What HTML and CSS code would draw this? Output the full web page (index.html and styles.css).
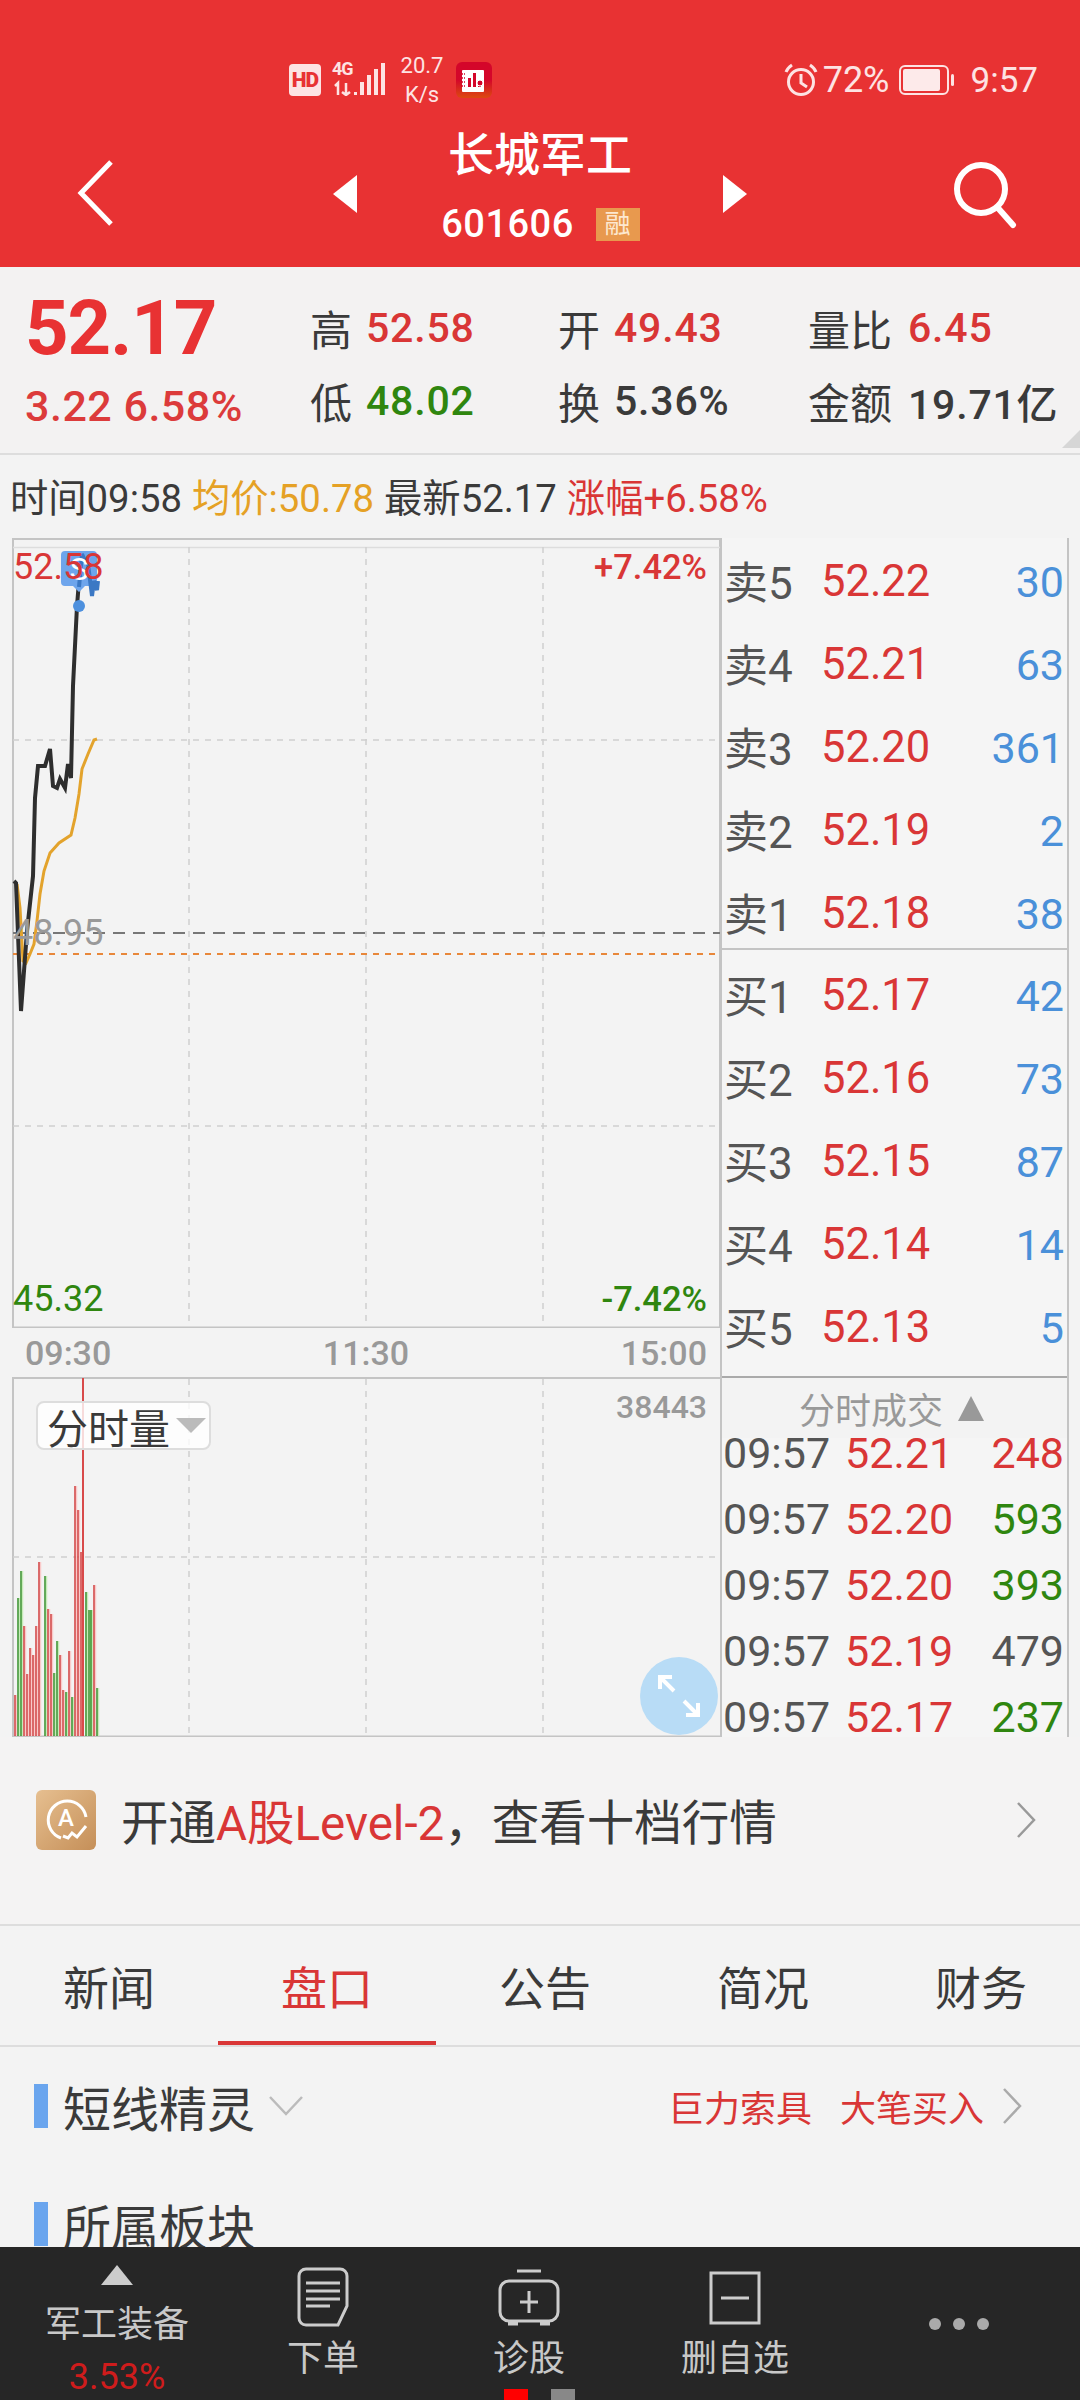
FILE: index.html
```html
<!DOCTYPE html>
<html lang="zh-CN">
<head>
    <meta charset="UTF-8">
    <meta name="viewport" content="width=device-width, initial-scale=1.0">
    <title>长城军工</title>
    <link rel="stylesheet" href="styles.css">
</head>
<body>
<div class="page">
    <header class="top">
        <div class="status">
            <div class="status-left">
                <span class="hd">HD</span>
                <div class="signal">
                    <span class="net">4G</span>
                    <svg class="signal-icon" width="54" height="34" viewBox="0 0 54 34">
                        <path d="M3 24l3-3v12M14 21v12M10 30l4 3 4-3" fill="none" stroke="#fde3e3" stroke-width="2.5"/>
                        <path d="M22 30h3v3h-3zM28 20h4v13h-4zM35 13h4v20h-4zM42 7h4v26h-4zM49 1h4v32h-4z" fill="#fde3e3"/>
                    </svg>
                </div>
                <div class="speed">20.7<br>K/s</div>
                <svg class="app" width="36" height="36" viewBox="0 0 36 36">
                    <defs>
                        <linearGradient id="appbg" x1="0" y1="0" x2="0" y2="1">
                            <stop offset="0.5" stop-color="#d4062a"/>
                            <stop offset="1" stop-color="#dc4a10"/>
                        </linearGradient>
                    </defs>
                    <rect width="36" height="36" rx="6" fill="url(#appbg)"/>
                    <rect x="6" y="8" width="22" height="22" rx="1" fill="#fff"/>
                    <path d="M5 12h4M5 16h4M5 20h4M5 24h4" stroke="#d4062a" stroke-width="1.500" stroke-dasharray="2 1"/>
                    <path d="M12 25v-9h3v9zM17 25V11h3v14zM22 25v-6h3v6z" fill="#d4062a"/>
                    <circle cx="24" cy="21" r="3" fill="#d4062a" stroke="#fff"/>
                </svg>
            </div>
            <div class="status-right">
                <svg width="34" height="34" viewBox="0 0 34 34" fill="none" stroke="#fde3e3" stroke-width="3">
                    <circle cx="17" cy="19" r="12.5"/>
                    <path d="M17 11v9l6 4M2 9c1-3 3-5 6-7M32 9c-1-3-3-5-6-7"/>
                </svg>
                <span class="pct">72%</span>
                <svg class="batt" width="56" height="30" viewBox="0 0 56 30">
                    <rect x="1" y="1" width="48" height="28" rx="5" fill="none" stroke="#fde3e3" stroke-width="2"/>
                    <rect x="4" y="4" width="37" height="22" rx="2" fill="#fdeaea"/>
                    <rect x="52" y="9" width="3" height="12" rx="1.5" fill="#fde3e3"/>
                </svg>
                <span class="clock">9:57</span>
            </div>
        </div>
        <div class="bar">
            <div class="back">
                <svg width="40" height="66" viewBox="0 0 40 66" fill="none" stroke="#fff" stroke-width="5">
                    <path d="M34 2L4 33l30 31"/>
                </svg>
            </div>
            <i class="tri tri-left"></i>
            <div class="stock">
                <div class="stock-name">长城军工</div>
                <div class="stock-code">601606<span class="rong">融</span></div>
            </div>
            <i class="tri tri-right"></i>
            <svg class="search" width="66" height="68" viewBox="0 0 66 68" fill="none" stroke="#fff" stroke-width="6">
                <circle cx="28" cy="28" r="24"/>
                <path d="M45 47l15 17" stroke-linecap="round"/>
            </svg>
        </div>
    </header>

    <div class="content">
        <section class="quote">
            <div class="price">
                <div class="price-now">52.17</div>
                <div class="price-chg">3.22 6.58%</div>
            </div>
            <div class="stats">
                <div class="stat"><span>高</span><b class="red">52.58</b></div>
                <div class="stat"><span>开</span><b class="red">49.43</b></div>
                <div class="stat"><span class="wide">量比</span><b class="red">6.45</b></div>
                <div class="stat"><span>低</span><b class="green">48.02</b></div>
                <div class="stat"><span>换</span><b>5.36%</b></div>
                <div class="stat"><span class="wide">金额</span><b>19.71亿</b></div>
            </div>
            <i class="corner"></i>
        </section>

        <div class="info">
            <span>时间09:58</span>
            <span class="gold">均价:50.78</span>
            <span>最新52.17</span>
            <span class="red">涨幅+6.58%</span>
        </div>

        <section class="market">
            <div class="left">
                <div class="chart">
                    <svg width="709" height="790" viewBox="12 537 709 790">
                        <path class="edge" d="M13 1327V538H720V1327M12 1326.500H721"/>
                        <path class="top-line" d="M13 546.500H720"/>
                        <path class="grid" d="M189 546V1326M366 546V1326M543 546V1326M13 739H720M13 1125H720"/>
                        <path class="base" d="M13 932H720"/>
                        <path class="avg-base" d="M13 953H720"/>
                        <polyline class="avg" points="17,883 20,907 23,960 26,962 30,953 34,943 37,920 40,893 44,870 50,852 59,842 71,834 75,817 79,793 82,768 88,753 94,739 97,738"/>
                        <polyline class="line" points="14,880 16,882 21,1010 27,930 33,875 35,797 38,765 45,765 50,748 53,785 57,787 60,778 65,787 68,763 71,777 73,685 77,605 79,580"/>
                        <path class="marker" d="M65 550h28a4 4 0 0 1 4 4v27a4 4 0 0 1-4 4H85l-6 6-6-6H65a4 4 0 0 1-4-4V554a4 4 0 0 1 4-4z"/>
                        <polyline class="line-top" points="79,586 82,553 85,560 88,563 92,595 94,580 97,589 98,580"/>
                        <circle class="dot" cx="79" cy="605" r="6"/>
                        <text class="marker-s" x="79" y="579">S</text>
                    </svg>
                    <span class="lbl lbl-high">52.58</span>
                    <span class="lbl lbl-mid">48.95</span>
                    <span class="lbl lbl-low">45.32</span>
                    <span class="pctl pctl-up">+7.42%</span>
                    <span class="pctl pctl-down">-7.42%</span>
                </div>
                <div class="axis"><span>09:30</span><span>11:30</span><span>15:00</span></div>
                <div class="vol">
                    <svg width="709" height="360" viewBox="12 1376 709 360">
                        <path class="edge" d="M13 1736V1377H720M12 1735.500H721"/>
                        <path class="grid" d="M189 1378V1735M366 1378V1735M543 1378V1735M13 1556H720"/>
                        <path class="bar-pale-r" d="M16.500 1735V1694M25.500 1735V1625M28.500 1735V1673M31.500 1735V1647M34.500 1735V1654M37.500 1735V1625M40.500 1735V1561M49.500 1735V1608M52.500 1735V1613M61.500 1735V1654M64.500 1735V1689M70.500 1735V1650M76.500 1735V1485M79.500 1735V1509M82.500 1735V1551M95.500 1735V1584"/>
                        <path class="bar-pale-g" d="M19.500 1735V1597M22.500 1735V1570M46.500 1735V1575M55.500 1735V1672M58.500 1735V1640M67.500 1735V1691M73.500 1735V1696M87.500 1735V1591M90.500 1735V1609M92.500 1735V1609M98.500 1735V1687"/>
                        <path class="bar-r" d="M15 1735V1694M24 1735V1625M27 1735V1673M30 1735V1647M33 1735V1654M36 1735V1625M39 1735V1561M48 1735V1608M51 1735V1613M60 1735V1654M63 1735V1689M69 1735V1650M75 1735V1485M78 1735V1509M81 1735V1551M94 1735V1584"/>
                        <path class="bar-g" d="M18 1735V1597M21 1735V1570M45 1735V1575M54 1735V1672M57 1735V1640M66 1735V1691M72 1735V1696M86 1735V1591M89 1735V1609M91 1735V1609M97 1735V1687"/>
                        <path class="cross" d="M83 1377V1735"/>
                    </svg>
                    <div class="vol-select">分时量<i class="vol-arrow"></i></div>
                    <span class="vol-max">38443</span>
                    <div class="expand">
                        <svg width="44" height="44" viewBox="0 0 44 44" fill="none" stroke="#fff" stroke-width="4">
                            <path d="M3 15V3h12M3 3l14 14M41 29v12H29M41 41L27 27"/>
                        </svg>
                    </div>
                </div>
            </div>
            <div class="right">
                <div class="book">
                    <div class="sell">
                        <div class="level"><span>卖5</span><b>52.22</b><em>30</em></div>
                        <div class="level"><span>卖4</span><b>52.21</b><em>63</em></div>
                        <div class="level"><span>卖3</span><b>52.20</b><em>361</em></div>
                        <div class="level"><span>卖2</span><b>52.19</b><em>2</em></div>
                        <div class="level"><span>卖1</span><b>52.18</b><em>38</em></div>
                    </div>
                    <div class="buy">
                        <div class="level"><span>买1</span><b>52.17</b><em>42</em></div>
                        <div class="level"><span>买2</span><b>52.16</b><em>73</em></div>
                        <div class="level"><span>买3</span><b>52.15</b><em>87</em></div>
                        <div class="level"><span>买4</span><b>52.14</b><em>14</em></div>
                        <div class="level"><span>买5</span><b>52.13</b><em>5</em></div>
                    </div>
                </div>
                <div class="ticks-head">分时成交<i class="ticks-arrow"></i></div>
                <div class="ticks">
                    <div class="tick"><span>09:57</span><b>52.21</b><em class="red">248</em></div>
                    <div class="tick"><span>09:57</span><b>52.20</b><em class="green">593</em></div>
                    <div class="tick"><span>09:57</span><b>52.20</b><em class="green">393</em></div>
                    <div class="tick"><span>09:57</span><b>52.19</b><em>479</em></div>
                    <div class="tick"><span>09:57</span><b>52.17</b><em class="green">237</em></div>
                </div>
            </div>
        </section>

        <div class="promo">
            <svg class="promo-icon" width="60" height="60" viewBox="0 0 60 60">
                <defs>
                    <linearGradient id="tan" x1="0" y1="0" x2="1" y2="1">
                        <stop offset="0" stop-color="#e6bf90"/>
                        <stop offset="1" stop-color="#c58f58"/>
                    </linearGradient>
                </defs>
                <rect width="60" height="60" rx="6" fill="url(#tan)"/>
                <path d="M25 48A19 19 0 1 1 50 27" fill="none" stroke="#fff" stroke-width="3"/>
                <path d="M27 46l5 2 4-5 5 4 9-11" fill="none" stroke="#fff" stroke-width="3"/>
                <text class="promo-a" x="30" y="36">A</text>
            </svg>
            <div class="promo-text">开通<span class="red">A股Level-2</span>，查看十档行情</div>
            <svg class="chev" width="20" height="36" viewBox="0 0 20 36" fill="none" stroke="#999" stroke-width="2.500">
                <path d="M2 1l16 17L2 35"/>
            </svg>
        </div>

        <nav class="tabs">
            <div class="tab">新闻</div>
            <div class="tab on">盘口</div>
            <div class="tab">公告</div>
            <div class="tab">简况</div>
            <div class="tab">财务</div>
        </nav>

        <div class="block">
            <i class="mark"></i>
            <span class="block-title">短线精灵</span>
            <svg class="block-down" width="34" height="20" viewBox="0 0 34 20" fill="none" stroke="#bbb" stroke-width="2.500">
                <path d="M1 1l16 17L33 1"/>
            </svg>
            <div class="block-links">
                <span>巨力索具</span>
                <span>大笔买入</span>
                <svg width="20" height="36" viewBox="0 0 20 36" fill="none" stroke="#aaa" stroke-width="2.500">
                    <path d="M2 1l16 17L2 35"/>
                </svg>
            </div>
        </div>
        <div class="block">
            <i class="mark"></i>
            <span class="block-title">所属板块</span>
        </div>
    </div>

    <footer class="dock">
        <div class="dock-first">
            <i class="dock-tri"></i>
            <div class="dock-sector">军工装备</div>
            <div class="dock-pct">3.53%</div>
        </div>
        <div class="tool">
            <svg width="52" height="60" viewBox="0 0 52 60" fill="none" stroke="#ccc" stroke-width="3">
                <path d="M9 2h34a7 7 0 0 1 7 7v30l-9 19H9a7 7 0 0 1-7-7V9a7 7 0 0 1 7-7z"/>
                <path d="M9 16h34M9 24h34M9 32h34M9 39h24"/>
            </svg>
            <span>下单</span>
        </div>
        <div class="tool">
            <svg width="62" height="60" viewBox="0 0 62 60" fill="none" stroke="#ccc" stroke-width="3">
                <path d="M19 4h24"/>
                <rect x="2" y="14" width="58" height="40" rx="9"/>
                <path d="M31 24v22M22 35h18"/>
                <path d="M10 56h10M42 56h10" stroke-width="5"/>
            </svg>
            <span>诊股</span>
        </div>
        <div class="tool">
            <svg width="52" height="60" viewBox="0 0 52 60" fill="none" stroke="#ccc" stroke-width="3">
                <rect x="2" y="6" width="48" height="50"/>
                <path d="M12 31h28"/>
            </svg>
            <span>删自选</span>
        </div>
        <div class="more"><i></i><i></i><i></i></div>
        <div class="pager"><i class="pager-on"></i><i></i></div>
    </footer>
</div>
</body>
</html>
```

FILE: styles.css
```css
*{
    box-sizing: border-box;
}
body{
    margin: 0;
    font-family: Roboto, "Noto Sans CJK SC", sans-serif;
    color: #3a3a3a;
}
i{
    display: block;
}
em{
    font-style: normal;
}
.red{
    color: #d93636;
}
.green{
    color: #2f860f;
}
.gold{
    color: #e5a125;
}
.page{
    width: 1080px;
    height: 2400px;
    display: flex;
    flex-direction: column;
    overflow: hidden;
    background-color: #f3f3f3;
}

/* top red header */
.top{
    height: 267px;
    flex: none;
    background-color: #e83233;
    color: #fde3e3;
}
.status{
    height: 110px;
    padding: 50px 42px 0 289px;
    display: flex;
    justify-content: space-between;
    align-items: center;
}
.status-left,
.status-right{
    display: flex;
    align-items: center;
}
.hd{
    width: 32px;
    height: 32px;
    border-radius: 4px;
    background-color: #fde3e3;
    color: #e83233;
    font-size: 21px;
    font-weight: 900;
    line-height: 32px;
    text-align: center;
    letter-spacing: -1px;
}
.signal{
    width: 56px;
    height: 36px;
    margin-left: 11px;
    position: relative;
}
.net{
    position: absolute;
    left: 0;
    top: -2px;
    font-size: 18px;
    font-weight: 700;
    line-height: 18px;
    letter-spacing: -1px;
}
.signal-icon{
    display: block;
}
.speed{
    width: 50px;
    margin-left: 9px;
    font-size: 22px;
    line-height: 29px;
    text-align: center;
}
.app{
    margin-left: 9px;
    display: block;
}
.status-right svg{
    display: block;
}
.pct{
    margin-left: 5px;
    font-size: 36px;
}
.batt{
    margin-left: 9px;
}
.clock{
    margin-left: 16px;
    font-size: 35px;
}
.bar{
    height: 157px;
    display: flex;
    align-items: flex-start;
    color: #fff;
}
.back{
    width: 333px;
    padding: 50px 0 0 77px;
}
.tri{
    width: 0;
    height: 0;
    margin-top: 65px;
    border-top: 19px solid transparent;
    border-bottom: 19px solid transparent;
}
.tri-left{
    border-right: 24px solid #fff;
}
.tri-right{
    border-left: 24px solid #fff;
}
.stock{
    width: 366px;
    display: flex;
    flex-direction: column;
    align-items: center;
}
.stock-name{
    margin-top: 15px;
    font-size: 46px;
    line-height: 60px;
    font-weight: 500;
}
.stock-code{
    margin-top: 9px;
    font-size: 38px;
    font-weight: 500;
    line-height: 60px;
    display: flex;
    align-items: center;
    letter-spacing: 0.5px;
    padding-left: 1px;
}
.rong{
    width: 44px;
    height: 33px;
    margin-left: 22px;
    background-color: #e8994e;
    color: #fde8d0;
    font-size: 26px;
    font-weight: 400;
    line-height: 33px;
    text-align: center;
}
.search{
    margin: 51px 0 0 206px;
}

/* quote block */
.content{
    flex: 1;
    overflow: hidden;
}
.quote{
    height: 188px;
    padding: 24px 0 0 25px;
    display: flex;
    position: relative;
    background-color: #f3f2f2;
    border-bottom: 2px solid #ddd;
}
.price{
    width: 285px;
    color: #e83233;
}
.price-now{
    font-size: 76px;
    font-weight: 700;
    line-height: 74px;
    letter-spacing: -1px;
}
.price-chg{
    margin-top: 4px;
    font-size: 43px;
    line-height: 74px;
    letter-spacing: 0.5px;
    font-weight: 500;
    color: #dc3b3b;
}
.stats{
    display: grid;
    grid-template-columns: 248px 250px auto;
    grid-auto-rows: 73px;
}
.stat{
    display: flex;
    align-items: center;
    font-size: 42px;
}
.stat span{
    margin-right: 14px;
}
.stat .wide{
    margin-right: 16px;
}
.stat b{
    font-weight: 500;
    font-size: 41px;
    letter-spacing: 0.8px;
}
.corner{
    position: absolute;
    right: 0;
    bottom: 5px;
    width: 0;
    height: 0;
    border-left: 18px solid transparent;
    border-bottom: 18px solid #d6d6d6;
}

/* line above the chart */
.info{
    height: 83px;
    padding: 0 0 3px 10px;
    display: flex;
    align-items: center;
    gap: 10px;
    font-size: 38.3px;
}

/* chart and order book */
.market{
    height: 1199px;
    padding-left: 12px;
    display: flex;
}
.left{
    width: 708px;
}
.chart{
    height: 790px;
    position: relative;
}
.chart svg,
.vol svg{
    display: block;
    fill: none;
}
.edge{
    stroke: #c4c4c4;
    stroke-width: 2;
}
.top-line{
    stroke: #ddd;
    stroke-width: 1.5;
}
.grid{
    stroke: #cfcfcf;
    stroke-width: 1.5;
    stroke-dasharray: 6 6;
}
.base{
    stroke: #777;
    stroke-width: 2;
    stroke-dasharray: 12 8;
}
.avg-base{
    stroke: #e8873a;
    stroke-width: 2;
    stroke-dasharray: 6 6;
}
.avg{
    stroke: #e3a32c;
    stroke-width: 3;
}
.line{
    stroke: #2e2e2e;
    stroke-width: 4;
}
.line-top{
    stroke: #3b78c4;
    stroke-width: 4;
}
.marker{
    fill: #6ea5ec;
}
.dot{
    fill: #4d90de;
}
.marker-s{
    fill: #fff;
    font-size: 32px;
    text-anchor: middle;
}
.lbl{
    position: absolute;
    left: 1px;
    font-size: 36px;
    line-height: 40px;
}
.lbl-high{
    top: 9px;
    color: #d93636;
}
.lbl-mid{
    top: 375px;
    color: #999;
}
.lbl-low{
    top: 741px;
    color: #2f860f;
}
.pctl{
    position: absolute;
    right: 13px;
    font-size: 34.5px;
    line-height: 40px;
    font-weight: 500;
}
.pctl-up{
    top: 9px;
    color: #d93636;
}
.pctl-down{
    top: 741px;
    color: #2f860f;
}
.axis{
    height: 49px;
    padding: 0 13px;
    display: flex;
    justify-content: space-between;
    align-items: center;
    color: #999;
    font-size: 34px;
    font-weight: 500;
}
.vol{
    height: 360px;
    position: relative;
}
.bar-r,
.bar-g{
    stroke-width: 1.5;
}
.bar-pale-r,
.bar-pale-g{
    stroke-width: 1.5;
}
.bar-r{
    stroke: #d23f3f;
}
.bar-g{
    stroke: #36912a;
}
.bar-pale-r{
    stroke: #f9caca;
}
.bar-pale-g{
    stroke: #c6ebb8;
}
.cross{
    stroke: #d84a4a;
    stroke-width: 2;
}
.vol-select{
    position: absolute;
    left: 24px;
    top: 24px;
    width: 175px;
    height: 49px;
    padding-left: 9px;
    display: flex;
    align-items: center;
    border: 2px solid #ddd;
    border-radius: 8px;
    background-color: rgba(255, 255, 255, 0.8);
    font-size: 41px;
}
.vol-arrow{
    margin-left: 6px;
    width: 0;
    height: 0;
    border-left: 15px solid transparent;
    border-right: 15px solid transparent;
    border-top: 15px solid #bbb;
}
.vol-max{
    position: absolute;
    right: 13px;
    top: 12px;
    color: #999;
    font-size: 32px;
    line-height: 36px;
    font-weight: 500;
}
.expand{
    position: absolute;
    left: 628px;
    top: 280px;
    width: 78px;
    height: 78px;
    border-radius: 50%;
    background-color: #b8dcf6;
    display: flex;
    align-items: center;
    justify-content: center;
}
.right{
    width: 349px;
    border-left: 2px solid #c4c4c4;
    border-right: 2px solid #c4c4c4;
    background-color: #f5f5f5;
}
.book{
    height: 840px;
    padding-top: 2px;
    border-bottom: 2px solid #aaa;
}
.sell{
    height: 410px;
    border-bottom: 2px solid #c4c4c4;
}
.buy{
    padding-top: 4px;
}
.level{
    height: 83px;
    padding: 0 3px 0 2px;
    display: flex;
    align-items: center;
    font-size: 44px;
    color: #555;
}
.level span{
    width: 97px;
    flex: none;
    margin-top: -3px;
}
.level b{
    font-weight: 400;
    font-size: 43.5px;
    color: #d93636;
}
.level em{
    flex: 1;
    text-align: right;
    font-size: 43px;
    color: #4a90d9;
}
.ticks-head{
    height: 60px;
    background-color: #f3f3f3;
    padding-left: 77px;
    display: flex;
    align-items: center;
    color: #999;
    font-size: 36px;
}
.ticks-arrow{
    margin-left: 15px;
    width: 0;
    height: 0;
    border-left: 13px solid transparent;
    border-right: 13px solid transparent;
    border-bottom: 25px solid #999;
}
.ticks{
    height: 297px;
    overflow: hidden;
}
.tick{
    height: 66px;
    padding: 0 3px 0 1px;
    display: flex;
    align-items: center;
    font-size: 43px;
    line-height: 34px;
    color: #555;
}
.tick:first-child{
    margin-top: -18px;
}
.tick b{
    margin-left: 15px;
    font-weight: 400;
    color: #d93636;
}
.tick em{
    flex: 1;
    text-align: right;
}

/* level 2 promo */
.promo{
    height: 189px;
    padding: 0 44px 22px 36px;
    display: flex;
    align-items: center;
    border-bottom: 2px solid #ddd;
    background-color: #f4f3f3;
}
.promo-icon{
    flex: none;
}
.promo-a{
    fill: #fff;
    font-size: 24px;
    font-weight: 500;
    text-anchor: middle;
}
.promo-text{
    margin-left: 25px;
    flex: 1;
    font-size: 47.5px;
}

/* tabs */
.tabs{
    height: 121px;
    display: flex;
    border-bottom: 2px solid #ddd;
}
.tab{
    flex: 0 0 218px;
    height: 119px;
    padding-top: 7px;
    font-size: 46px;
    line-height: 112px;
    text-align: center;
}
.tab.on{
    color: #d93636;
    border-bottom: 4px solid #d93636;
}

/* sections under the tabs */
.block{
    height: 118px;
    padding: 0 58px 0 34px;
    display: flex;
    align-items: center;
}
.mark{
    width: 14px;
    height: 44px;
    background-color: #6aa5ee;
}
.block-title{
    margin-left: 15px;
    font-size: 48px;
}
.block-down{
    margin-left: 14px;
}
.block-links{
    margin-left: auto;
    display: flex;
    align-items: center;
    gap: 28px;
    color: #d93636;
    font-size: 36px;
}
.block-links svg{
    margin-left: -10px;
}

/* bottom dock */
.dock{
    height: 153px;
    flex: none;
    padding-left: 14px;
    display: flex;
    position: relative;
    background-color: #262626;
    color: #c8c8c8;
}
.dock-first,
.tool{
    width: 206px;
    display: flex;
    flex-direction: column;
    align-items: center;
}
.dock-tri{
    margin-top: 18px;
    width: 0;
    height: 0;
    border-left: 16px solid transparent;
    border-right: 16px solid transparent;
    border-bottom: 20px solid #ccc;
}
.dock-sector{
    margin-top: 15px;
    font-size: 36px;
    line-height: 50px;
}
.dock-pct{
    margin-top: 2px;
    font-size: 36px;
    line-height: 50px;
    color: #cf1c1c;
}
.tool{
    padding-top: 20px;
}
.tool svg{
    display: block;
}
.tool span{
    margin-top: 7px;
    font-size: 36px;
    line-height: 50px;
}
.more{
    margin-left: 18px;
    width: 206px;
    display: flex;
    justify-content: center;
    gap: 12px;
    padding-top: 71px;
}
.more i{
    width: 12px;
    height: 12px;
    border-radius: 50%;
    background-color: #aaa;
}
.pager{
    position: absolute;
    left: 504px;
    bottom: 0;
    display: flex;
    gap: 23px;
}
.pager i{
    width: 24px;
    height: 11px;
    background-color: #888;
}
.pager .pager-on{
    background-color: #f00;
}
```
